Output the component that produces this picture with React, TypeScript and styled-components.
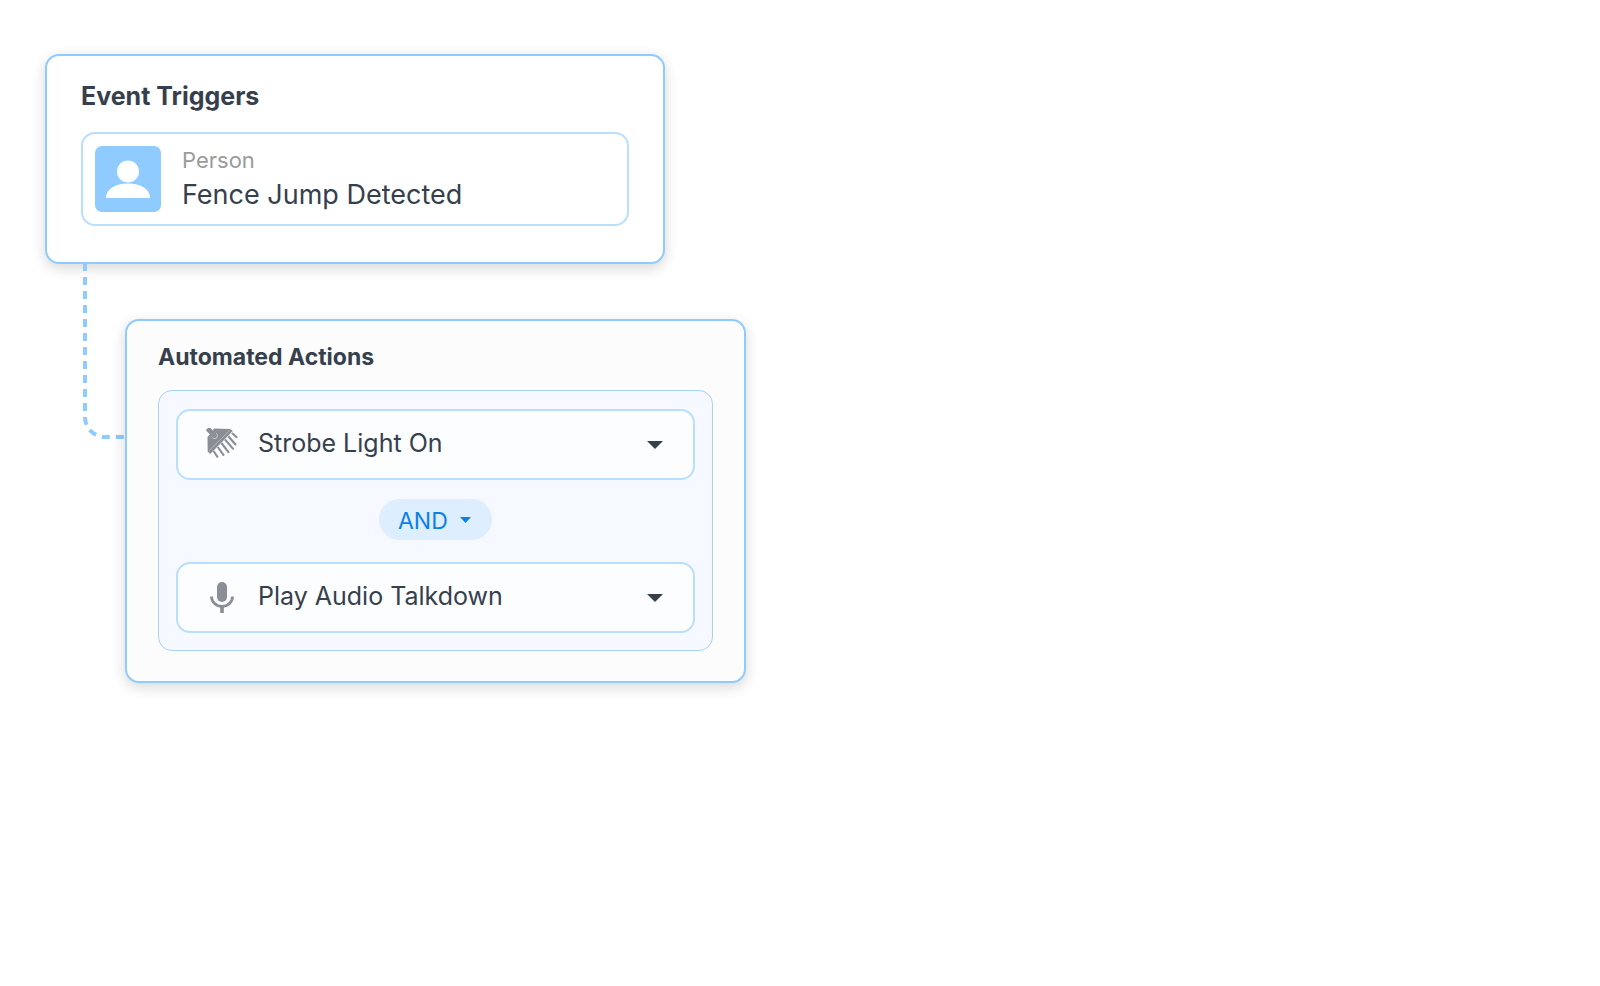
import React, { useState } from "react";
import styled, { createGlobalStyle } from "styled-components";

const GlobalStyle = createGlobalStyle`
  *, *::before, *::after { box-sizing: border-box; }
  body {
    margin: 0;
    background: #ffffff;
    color: #36404d;
    font-family: Inter, "Liberation Sans", sans-serif;
  }
`;

const Page = styled.main`
  padding: 54px 45px;
`;

const Card = styled.section<{ $muted?: boolean }>`
  width: 100%;
  max-width: ${(p) => (p.$muted ? "621px" : "620px")};
  padding: ${(p) => (p.$muted ? "20px 31px 30px" : "24px 34px 36px")};
  border: 2px solid #8fcbff;
  border-radius: 14px;
  background: ${(p) => (p.$muted ? "#fcfcfc" : "#ffffff")};
  box-shadow: 0 4px 14px rgba(0, 0, 0, 0.16);
`;

const Title = styled.h2<{ $small?: boolean }>`
  margin: 0 0 ${(p) => (p.$small ? "17px" : "20px")};
  font-size: ${(p) => (p.$small ? "23px" : "25px")};
  line-height: 32px;
  font-weight: 700;
`;

const Trigger = styled.div`
  display: flex;
  align-items: center;
  gap: 21px;
  height: 94px;
  padding: 0 12px;
  border: 2px solid #b9dffd;
  border-radius: 14px;
`;

const Tile = styled.div`
  flex: none;
  width: 66px;
  height: 66px;
  border-radius: 7px;
  background: #8fcbff;
  svg { display: block; }
`;

const TriggerText = styled.div`
  display: flex;
  flex-direction: column;
`;

const Kind = styled.span`
  font-size: 22px;
  line-height: 32px;
  color: #9b9b9b;
`;

const EventName = styled.span`
  font-size: 27px;
  line-height: 38px;
`;

const Branch = styled.div`
  display: flex;
  align-items: flex-start;
`;

const Connector = styled.svg`
  flex: none;
  width: 80px;
  height: 180px;
`;

const BranchBody = styled.div`
  flex: 1;
  padding-top: 55px;
`;

const Group = styled.div`
  display: flex;
  flex-direction: column;
  align-items: center;
  padding: 18px 17px 17px;
  border: 1px solid #a3d3fd;
  border-radius: 14px;
  background: #f6f9ff;
`;

const Field = styled.label`
  display: grid;
  grid-template-columns: 82px 1fr 64px;
  align-items: center;
  width: 100%;
  height: 71px;
  border: 2px solid #b9dffd;
  border-radius: 14px;
  background: #fcfdff;
  svg {
    grid-row: 1;
    pointer-events: none;
    z-index: 1;
  }
`;

const FieldIcon = styled.svg`
  grid-column: 1;
  margin-left: 27px;
`;

const FieldCaret = styled.svg`
  grid-column: 3;
  margin-left: 18px;
`;

const FieldSelect = styled.select`
  grid-row: 1;
  grid-column: 1 / -1;
  width: 100%;
  height: 67px;
  margin: 0;
  padding: 0 64px 3px 80px;
  appearance: none;
  border: 0;
  border-radius: 12px;
  background: transparent;
  color: inherit;
  font: 400 25px/32px Inter, "Liberation Sans", sans-serif;
  cursor: pointer;
`;

const Pill = styled.label`
  display: grid;
  grid-template-columns: 1fr 32px;
  align-items: center;
  width: 113px;
  height: 41px;
  margin: 19px 0 22px;
  border-radius: 21px;
  background: #dceeff;
  color: #0b80e6;
  svg {
    grid-row: 1;
    grid-column: 2;
    pointer-events: none;
    z-index: 1;
  }
`;

const PillSelect = styled.select`
  grid-row: 1;
  grid-column: 1 / -1;
  width: 100%;
  height: 41px;
  margin: 0;
  padding: 2px 32px 0 19px;
  appearance: none;
  border: 0;
  border-radius: 21px;
  background: transparent;
  color: inherit;
  font: 400 23px/28px Inter, "Liberation Sans", sans-serif;
  cursor: pointer;
`;

const StrobeIcon = () => (
  <FieldIcon width="34" height="34" viewBox="0 0 34 34" fill="none" aria-hidden="true">
    <path d="M9 0.5 L25 1 L27.8 3 L5.2 26 L2.7 23.5 L2.5 9 Z" fill="#8a8f95" />
    <path d="M2 1 L6 5" stroke="#fcfdff" strokeWidth="7" />
    <circle cx="9.6" cy="7.8" r="3.1" fill="#c6cace" />
    <path d="M2.5 0.5 L9.5 7.5" stroke="#8a8f95" strokeWidth="4.8" />
    <circle cx="9.3" cy="7.4" r="2.5" fill="#8a8f95" />
    <path d="M4 22.8 L24.6 2.5" stroke="#c3c7cb" strokeWidth="0.7" />
    <path
      d="M27 5 L32.2 9.8 M23.3 8.2 L31 17 M20 11.5 L28.6 21.4 M16.4 15 L24 24.8 M12.8 19 L18.9 27.6 M8.6 23 L12.8 29.5"
      stroke="#8a8f95"
      strokeWidth="2.1"
    />
  </FieldIcon>
);

const MicIcon = () => (
  <FieldIcon width="34" height="34" viewBox="0 0 34 34" fill="none" aria-hidden="true">
    <rect x="12" y="1" width="10" height="20" rx="5" fill="#8a8f95" />
    <path d="M6.5 15.5 a10.5 10 0 0 0 21 0" stroke="#8a8f95" strokeWidth="2.8" />
    <path d="M17 25 V32" stroke="#8a8f95" strokeWidth="3.6" />
  </FieldIcon>
);

function ActionField(props: { name: string; options: string[]; icon: React.ReactNode }) {
  const [value, setValue] = useState(props.options[0]);
  return (
    <Field>
      {props.icon}
      <FieldSelect aria-label={props.name} value={value} onChange={(e) => setValue(e.target.value)}>
        {props.options.map((o) => (
          <option key={o}>{o}</option>
        ))}
      </FieldSelect>
      <FieldCaret width="16" height="8" viewBox="0 0 16 8" aria-hidden="true">
        <path d="M0 0 H16 L8 8 Z" fill="#36404d" />
      </FieldCaret>
    </Field>
  );
}

export default function App() {
  return (
    <>
      <GlobalStyle />
      <Page>
        <Card>
          <Title>Event Triggers</Title>
          <Trigger>
            <Tile>
              <svg width="66" height="66" viewBox="0 0 66 66" fill="#ffffff" aria-hidden="true">
                <circle cx="33" cy="25.5" r="11" />
                <path d="M11 52 C11 43 20 37.5 33 37.5 C46 37.5 55 43 55 52 Z" />
              </svg>
            </Tile>
            <TriggerText>
              <Kind>Person</Kind>
              <EventName>Fence Jump Detected</EventName>
            </TriggerText>
          </Trigger>
        </Card>
        <Branch>
          <Connector viewBox="0 0 80 180" fill="none" aria-hidden="true">
            <path
              d="M40 -1 V153 A20 20 0 0 0 60 173 H80"
              stroke="#8fcbff"
              strokeWidth="4"
              strokeDasharray="8 6"
            />
          </Connector>
          <BranchBody>
            <Card $muted>
              <Title $small>Automated Actions</Title>
              <Group>
                <ActionField name="First action" options={["Strobe Light On"]} icon={<StrobeIcon />} />
                <Pill>
                  <PillSelect aria-label="Condition" defaultValue="AND">
                    <option>AND</option>
                    <option>OR</option>
                  </PillSelect>
                  <svg width="11" height="6" viewBox="0 0 11 6" aria-hidden="true">
                    <path d="M0 0 H11 L5.5 6 Z" fill="#0b80e6" />
                  </svg>
                </Pill>
                <ActionField name="Second action" options={["Play Audio Talkdown"]} icon={<MicIcon />} />
              </Group>
            </Card>
          </BranchBody>
        </Branch>
      </Page>
    </>
  );
}
